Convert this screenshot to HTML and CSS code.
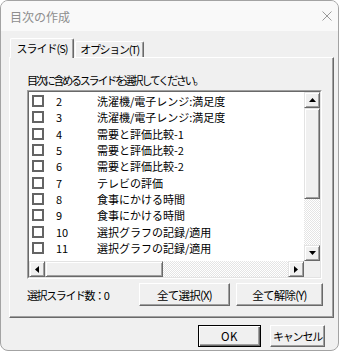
FILE: index.html
```html
<!DOCTYPE html>
<html lang="ja">
<head>
    <meta charset="UTF-8">
    <meta name="viewport" content="width=device-width, initial-scale=1.0">
    <title>目次の作成</title>
    <link rel="stylesheet" href="styles.css">
</head>
<body>
    <div class="window">
        <div class="titlebar">
            <span class="title">目次の作成</span>
            <svg class="close" width="10" height="10" viewBox="0 0 10 10">
                <path d="M0.5 0.5 L9.5 9.5 M9.5 0.5 L0.5 9.5" stroke="#9a9a9a" stroke-width="1" fill="none"/>
            </svg>
        </div>

        <div class="dialog-body">
            <div class="tabs">
                <div class="tab active">スライド(S)</div>
                <div class="tab">オプション(T)</div>
            </div>

            <div class="panel">
                <div class="prompt">目次に含めるスライドを選択してください。</div>

                <div class="listbox">
                    <div class="list-frame">
                        <div class="rows">
                            <div class="row"><span class="check"></span><span class="num">2</span><span>洗濯機/電子レンジ:満足度</span></div>
                            <div class="row"><span class="check"></span><span class="num">3</span><span>洗濯機/電子レンジ:満足度</span></div>
                            <div class="row"><span class="check"></span><span class="num">4</span><span>需要と評価比較-1</span></div>
                            <div class="row"><span class="check"></span><span class="num">5</span><span>需要と評価比較-2</span></div>
                            <div class="row"><span class="check"></span><span class="num">6</span><span>需要と評価比較-2</span></div>
                            <div class="row"><span class="check"></span><span class="num">7</span><span>テレビの評価</span></div>
                            <div class="row"><span class="check"></span><span class="num">8</span><span>食事にかける時間</span></div>
                            <div class="row"><span class="check"></span><span class="num">9</span><span>食事にかける時間</span></div>
                            <div class="row"><span class="check"></span><span class="num">10</span><span>選択グラフの記録/適用</span></div>
                            <div class="row"><span class="check"></span><span class="num">11</span><span>選択グラフの記録/適用</span></div>
                        </div>

                        <div class="vscroll">
                            <div class="sb-btn">
                                <svg width="7" height="4" viewBox="0 0 7 4"><polygon points="3.5,0 7,4 0,4" fill="#000"/></svg>
                            </div>
                            <div class="sb-thumb v-thumb"></div>
                            <div class="sb-track"></div>
                            <div class="sb-btn">
                                <svg width="7" height="4" viewBox="0 0 7 4"><polygon points="0,0 7,0 3.5,4" fill="#000"/></svg>
                            </div>
                        </div>

                        <div class="hscroll">
                            <div class="sb-btn">
                                <svg width="4" height="7" viewBox="0 0 4 7"><polygon points="4,0 4,7 0,3.5" fill="#000"/></svg>
                            </div>
                            <div class="sb-thumb h-thumb"></div>
                            <div class="sb-track"></div>
                            <div class="sb-btn">
                                <svg width="4" height="7" viewBox="0 0 4 7"><polygon points="0,0 4,3.5 0,7" fill="#000"/></svg>
                            </div>
                        </div>

                        <div class="corner"></div>
                    </div>
                </div>

                <div class="panel-foot">
                    <span class="count">選択スライド数：0</span>
                    <button class="btn select-all">全て選択(X)</button>
                    <button class="btn clear-all">全て解除(Y)</button>
                </div>
            </div>

            <div class="dialog-buttons">
                <button class="btn btn-ok">OK</button>
                <button class="btn btn-cancel">キャンセル</button>
            </div>
        </div>
    </div>
</body>
</html>
```

FILE: styles.css
```css
body {
    margin: 0;
    background-color: #ffffff;
    font-family: "Noto Sans CJK JP", "Noto Sans", sans-serif;
    font-size: 12px;
    color: #000000;
}

.window {
    width: 339px;
    height: 351px;
    box-sizing: border-box;
    border: 1px solid #a3a3a3;
    border-radius: 8px;
    background-color: #f0f0f0;
    overflow: hidden;
}

.titlebar {
    height: 30px;
    background-color: #f9f9f9;
    display: flex;
    align-items: center;
    justify-content: space-between;
    padding: 0 6px 0 9px;
}

.title {
    color: #8e8e8e;
    font-size: 12px;
}

.dialog-body {
    padding: 7px 0 0 8px;
}

/* タブ */
.tabs {
    display: flex;
    align-items: flex-end;
    height: 19px;
    padding-left: 1px;
}

.tab {
    box-sizing: border-box;
    width: 69px;
    height: 16px;
    border-top: 1px solid #ffffff;
    border-left: 1px solid #ffffff;
    border-right: 1px solid #696969;
    border-radius: 2px 2px 0 0;
    box-shadow: inset -1px 0 #a0a0a0;
    text-align: center;
    white-space: nowrap;
    font-size: 11px;
    line-height: 15px;
    letter-spacing: -1.3px;
}

.tab.active {
    position: relative;
    z-index: 1;
    width: 64px;
    height: 20px;
    margin-right: 1px;
    margin-bottom: -1px;
    background-color: #f0f0f0;
    line-height: 18px;
    letter-spacing: -1px;
}

.panel {
    box-sizing: border-box;
    width: 325px;
    height: 261px;
    padding: 15px 10px 0 17px;
    border-top: 1px solid #ffffff;
    border-left: 1px solid #ffffff;
    border-right: 1px solid #696969;
    border-bottom: 1px solid #696969;
    box-shadow: inset -1px -1px #a0a0a0;
}

.prompt {
    height: 14px;
    line-height: 14px;
    margin-bottom: 3px;
    font-size: 11px;
    letter-spacing: -2.2px;
    white-space: nowrap;
}

/* リストボックス */
.listbox {
    width: 295px;
    height: 189px;
    box-sizing: border-box;
    border: 1px solid;
    border-color: #a0a0a0 #ffffff #ffffff #a0a0a0;
}

.list-frame {
    height: 100%;
    box-sizing: border-box;
    border: 1px solid;
    border-color: #696969 #e3e3e3 #e3e3e3 #696969;
    background-color: #ffffff;
    display: grid;
    grid-template-columns: 1fr 16px;
    grid-template-rows: 1fr 16px;
}

.rows {
    overflow: hidden;
    padding-top: 1px;
}

.row {
    height: 16.3px;
    display: flex;
    align-items: center;
    padding-left: 3px;
    white-space: nowrap;
    font-size: 11px;
    line-height: 14px;
}

.check {
    width: 12px;
    height: 12px;
    box-sizing: border-box;
    border: 2px solid #646464;
    margin-right: 12px;
    flex-shrink: 0;
}

.num {
    width: 41px;
    flex-shrink: 0;
}

.vscroll {
    display: flex;
    flex-direction: column;
}

.hscroll {
    display: flex;
}

.sb-btn,
.sb-thumb {
    box-sizing: border-box;
    background-color: #f0f0f0;
    border: 1px solid;
    border-color: #e3e3e3 #696969 #696969 #e3e3e3;
    box-shadow: inset 1px 1px #ffffff, inset -1px -1px #a0a0a0;
}

.sb-btn {
    width: 16px;
    height: 16px;
    flex-shrink: 0;
    display: flex;
    align-items: center;
    justify-content: center;
}

.sb-btn svg {
    display: block;
}

.v-thumb {
    height: 91px;
    flex-shrink: 0;
}

.h-thumb {
    width: 118px;
    flex-shrink: 0;
}

.sb-track {
    flex: 1;
    background: repeating-conic-gradient(#e4e4e4 0 25%, #ffffff 0 50%) 0 0 / 2px 2px;
}

.corner {
    background-color: #f0f0f0;
}

/* 下部 */
.panel-foot {
    display: flex;
    align-items: center;
    margin-top: 4px;
}

.count {
    flex: 1;
    font-size: 11px;
    letter-spacing: -1.4px;
    white-space: nowrap;
}

.btn {
    box-sizing: border-box;
    height: 23px;
    padding: 0;
    background-color: #f0f0f0;
    border: 1px solid;
    border-color: #ffffff #696969 #696969 #ffffff;
    box-shadow: inset -1px -1px #a0a0a0;
    font-family: inherit;
    font-size: 11.5px;
    color: #000000;
    letter-spacing: -0.8px;
    white-space: nowrap;
}

.select-all {
    width: 91px;
    margin-right: 6px;
}

.clear-all {
    width: 87px;
}

.dialog-buttons {
    display: flex;
    justify-content: flex-end;
    gap: 9px;
    margin-top: 7px;
    padding-right: 13px;
}

.btn-ok {
    width: 63px;
    height: 22px;
    border: 1px solid #000000;
    box-shadow: inset 1px 1px #ffffff, inset -1px -1px #696969, inset -2px -2px #a0a0a0;
    letter-spacing: 0.5px;
}

.btn-cancel {
    width: 55px;
    height: 22px;
    font-size: 11px;
    letter-spacing: -1.2px;
}
```
